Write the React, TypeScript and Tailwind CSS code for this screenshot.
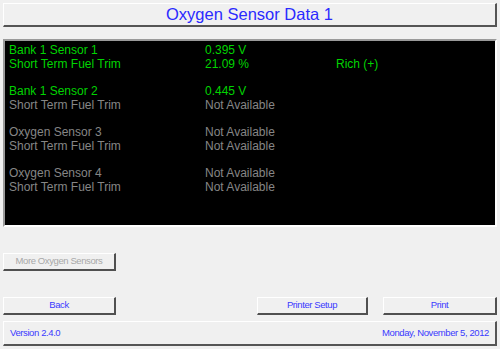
const GREEN = "text-[#00d400]";
const GRAY = "text-[#868686]";

type Row = { label: string; value: string; status?: string; on: boolean };

const groups: Row[][] = [
  [
    { label: "Bank 1 Sensor 1", value: "0.395 V", on: true },
    { label: "Short Term Fuel Trim", value: "21.09 %", status: "Rich (+)", on: true },
  ],
  [
    { label: "Bank 1 Sensor 2", value: "0.445 V", on: true },
    { label: "Short Term Fuel Trim", value: "Not Available", on: false },
  ],
  [
    { label: "Oxygen Sensor 3", value: "Not Available", on: false },
    { label: "Short Term Fuel Trim", value: "Not Available", on: false },
  ],
  [
    { label: "Oxygen Sensor 4", value: "Not Available", on: false },
    { label: "Short Term Fuel Trim", value: "Not Available", on: false },
  ],
];

function RaisedButton({ label, width, disabled }: { label: string; width: string; disabled?: boolean }) {
  return (
    <div
      className={`${width} h-[18px] flex items-center justify-center bg-[#f0f0f0] border-t border-l border-t-white border-l-white border-r-2 border-b-2 border-r-[#505050] border-b-[#505050] text-[9.5px] tracking-[-0.4px] ${
        disabled ? "text-[#a8a8a8]" : "text-[#3a3aff]"
      }`}
    >
      {label}
    </div>
  );
}

export default function App() {
  return (
    <div
      className="w-[500px] h-[349px] bg-[#f0f0f0] flex flex-col px-[3px] pt-[3px] overflow-hidden"
      style={{ fontFamily: '"Liberation Sans", Arial, sans-serif' }}
    >
      {/* title */}
      <div className="h-[24px] flex items-center justify-center border-t border-l border-t-white border-l-white border-r-2 border-b-2 border-r-[#555] border-b-[#555] text-[16.5px] text-[#2a2aff]">
        Oxygen Sensor Data 1
      </div>

      {/* data panel */}
      <div className="mt-[12px] h-[188px] bg-black border-t-2 border-l-2 border-t-[#9a9a9a] border-l-[#9a9a9a] border-r-2 border-b-2 border-r-white border-b-white pl-[4px] pt-[2px] text-[12px] leading-[14px]">
        {groups.map((g, i) => (
          <div key={i} className="mb-[13px]">
            {g.map((r, j) => (
              <div key={j} className={`flex h-[14px] ${r.on ? GREEN : GRAY}`}>
                <span className="w-[196px]">{r.label}</span>
                <span className="w-[131px]">{r.value}</span>
                <span>{r.status}</span>
              </div>
            ))}
          </div>
        ))}
      </div>

      <div className="mt-[26px]">
        <RaisedButton label="More Oxygen Sensors" width="w-[113px]" disabled />
      </div>

      <div className="mt-[26px] flex">
        <RaisedButton label="Back" width="w-[113px]" />
        <div className="flex-1" />
        <RaisedButton label="Printer Setup" width="w-[111px]" />
        <div className="w-[15px]" />
        <RaisedButton label="Print" width="w-[114px]" />
      </div>

      {/* footer */}
      <div className="mt-[6px] h-[25px] flex items-center justify-between px-[6px] border-t border-l border-t-white border-l-white border-r-2 border-b-2 border-r-[#555] border-b-[#555] text-[9.5px] tracking-[-0.4px] text-[#3a3aff]">
        <span>Version 2.4.0</span>
        <span>Monday, November 5, 2012</span>
      </div>
    </div>
  );
}
